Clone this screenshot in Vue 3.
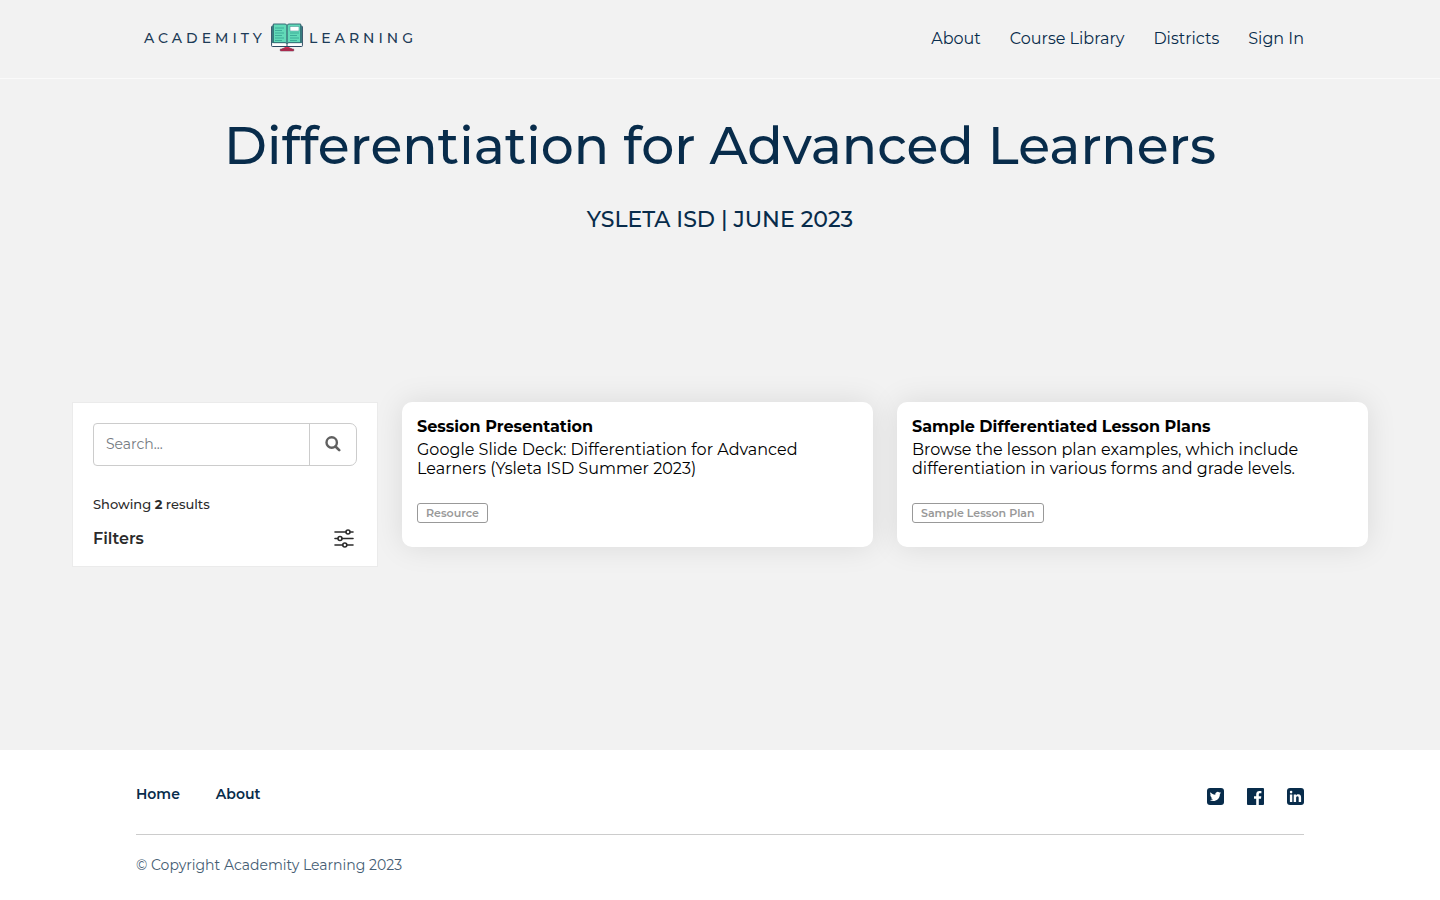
<script setup>
import { ref } from 'vue'

const query = ref('')
const navLinks = ['About', 'Course Library', 'Districts', 'Sign In']
const footerLinks = ['Home', 'About']
const cards = [
  {
    title: 'Session Presentation',
    text: 'Google Slide Deck: Differentiation for Advanced Learners (Ysleta ISD Summer 2023)',
    tag: 'Resource',
  },
  {
    title: 'Sample Differentiated Lesson Plans',
    text: 'Browse the lesson plan examples, which include differentiation in various forms and grade levels.',
    tag: 'Sample Lesson Plan',
  },
]
</script>

<template>
  <div class="page">
    <header class="header">
      <div class="container header-inner">
        <a class="logo" href="#" aria-label="Academity Learning">
          <span>ACADEMITY</span>
          <svg class="logo-book" viewBox="0 0 32 29" aria-hidden="true">
            <path d="M14 23h4v1.500l3 1.500H11l3-1.500z" fill="#e22b55" stroke="#a82c4c" stroke-width="0.500" />
            <rect x="9.300" y="26" width="13.400" height="2" rx="0.300" fill="#c92a50" stroke="#4d2c46" stroke-width="0.500" />
            <rect x="0.600" y="3" width="30.800" height="20.500" rx="0.800" fill="#fff" stroke="#2b4860" />
            <path d="M1 3h30v17H1z" fill="#3c8585" />
            <path d="M2.300 1h11.700q1.500 0 2 1.500q0.500-1.500 2-1.500h11.700v18.700H18q-1.500 0-2 1q-0.500-1-2-1H2.300z" fill="#62dab8" stroke="#2b5c6b" stroke-width="0.900" />
            <path d="M16 2.500V23.500" stroke="#2b4860" />
            <path d="M4 5h9M4 7.500h7M4 10h9M4 12.500h7M4 15h9M4 17.500h7M19 10h9M19 12.500h7M19 15h9M19 17.500h7" stroke="#3aa795" stroke-width="0.900" />
            <rect x="19" y="3.500" width="9" height="4.500" fill="#fff" stroke="#4d9b99" stroke-width="0.600" />
          </svg>
          <span>LEARNING</span>
        </a>
        <nav class="nav" aria-label="Main">
          <a v-for="link in navLinks" :key="link" href="#">{{ link }}</a>
        </nav>
      </div>
    </header>

    <main class="main">
      <section class="hero">
        <h1>Differentiation for Advanced Learners</h1>
        <p>YSLETA ISD | JUNE 2023</p>
      </section>

      <div class="content">
        <aside class="sidebar">
          <form class="search" role="search" @submit.prevent>
            <input v-model="query" type="text" placeholder="Search..." aria-label="Search" />
            <button type="submit" aria-label="Submit search">
              <svg viewBox="0 0 16 16" width="16" height="16" fill="none" stroke="#606060" aria-hidden="true">
                <circle cx="6.700" cy="6.500" r="5.200" stroke-width="2.400" />
                <path d="M10.500 10.500l3.700 3.700" stroke-width="2.600" stroke-linecap="round" />
              </svg>
            </button>
          </form>
          <p class="count">Showing <strong>2</strong> results</p>
          <button class="filters" type="button">
            <span>Filters</span>
            <svg viewBox="0 0 20 20" width="20" height="20" fill="none" stroke="#2b2b2b" stroke-width="1.600" stroke-linecap="round" aria-hidden="true">
              <path d="M1 4h10.500M16.500 4H19M1 10.500h2.500M8 10.500h11M1 17h7.500M13 17h6" />
              <circle cx="14" cy="4" r="2" />
              <circle cx="6" cy="10.500" r="2" />
              <circle cx="10.800" cy="17" r="2" />
            </svg>
          </button>
        </aside>

        <article v-for="card in cards" :key="card.title" class="card">
          <h2>{{ card.title }}</h2>
          <p>{{ card.text }}</p>
          <span class="tag">{{ card.tag }}</span>
        </article>
      </div>
    </main>

    <footer class="footer">
      <div class="container">
        <div class="footer-top">
          <nav class="footer-nav" aria-label="Footer">
            <a v-for="link in footerLinks" :key="link" href="#">{{ link }}</a>
          </nav>
          <div class="social">
            <a href="#" aria-label="Twitter">
              <svg viewBox="0.5 0.5 17 17" width="17" height="17" aria-hidden="true">
                <rect x="0.500" y="0.500" width="17" height="17" rx="3" fill="#082c4b" />
                <path d="M14.600 5.400c-.4.200-.9.300-1.300.400.500-.3.800-.7 1-1.300-.5.300-1 .5-1.500.6a2.350 2.350 0 0 0-4 2.100C6.900 7.100 5.200 6.200 4 4.800c-.6 1.100-.3 2.400.7 3.100-.4 0-.7-.1-1-.3 0 1.100.8 2.100 1.900 2.400-.4.100-.7.100-1.100 0 .3 1 1.200 1.600 2.200 1.600-1 .8-2.200 1.100-3.400 1 3.800 2.300 10.100.5 10.100-6.100.500-.3.900-.7 1.200-1.100z" fill="#fff" />
              </svg>
            </a>
            <a href="#" aria-label="Facebook">
              <svg viewBox="0.5 0.5 17 17" width="17" height="17" aria-hidden="true">
                <rect x="0.500" y="0.500" width="17" height="17" rx="1" fill="#082c4b" />
                <path d="M9.700 17.500v-6.300H7.500V8.700h2.200V6.800c0-2.200 1.300-3.400 3.300-3.400.9 0 1.500.1 1.900.1v2.200h-1.300c-1 0-1.300.5-1.300 1.300v1.700h2.500l-.3 2.500h-2.200v6.300z" fill="#fff" />
              </svg>
            </a>
            <a href="#" aria-label="LinkedIn">
              <svg viewBox="0.5 0.5 17 17" width="17" height="17" aria-hidden="true">
                <rect x="0.500" y="0.500" width="17" height="17" rx="3" fill="#082c4b" />
                <circle cx="4.600" cy="4.600" r="1.300" fill="#fff" />
                <path d="M3.400 7h2.400v7.500H3.400zM7.200 7h2.300v1c.4-.7 1.200-1.200 2.300-1.200 2.200 0 2.800 1.400 2.800 3.400v4.300h-2.400v-3.900c0-1-.2-1.800-1.200-1.800s-1.400.7-1.400 1.800v3.900H7.200z" fill="#fff" />
              </svg>
            </a>
          </div>
        </div>
        <p class="copyright">© Copyright Academity Learning 2023</p>
      </div>
    </footer>
  </div>
</template>

<style>
body {
  margin: 0;
  background: #f2f2f2;
}
</style>

<style scoped>
.page {
  min-height: 100vh;
  display: flex;
  flex-direction: column;
  font-family: Montserrat, Inter, "Open Sans", sans-serif;
  font-size: 16px;
  line-height: 19px;
  color: #000;
}

.page * {
  box-sizing: border-box;
}

h1,
h2,
p {
  margin: 0;
}

a {
  color: #082c4b;
  text-decoration: none;
}

.container {
  padding: 0 136px;
}

.header {
  border-bottom: 1px solid #fafafa;
}

.header-inner {
  display: flex;
  justify-content: space-between;
  align-items: center;
  height: 78px;
  padding-bottom: 2px;
}

.logo {
  display: flex;
  align-items: center;
  padding-left: 8px;
  font-size: 14px;
  letter-spacing: 4px;
  font-weight: 500;
  color: #1d3b57;
}

.logo-book {
  width: 32px;
  height: 29px;
  margin: 0 6px 2px 5px;
}

.nav {
  display: flex;
  gap: 29px;
}

.main {
  flex: 1;
}

.hero {
  padding-top: 35px;
  text-align: center;
  color: #082c4b;
}

.hero h1 {
  font-size: 52px;
  line-height: 64px;
  font-weight: 500;
}

.hero p {
  margin-top: 29px;
  font-size: 22px;
  line-height: 26px;
  font-weight: 500;
}

.content {
  display: grid;
  grid-template-columns: 306px 1fr 1fr;
  gap: 24px;
  align-items: start;
  padding: 169px 72px 72px;
}

.sidebar {
  padding: 20px 20px 18px;
  background: #fff;
  border: 1px solid #ebebeb;
  color: #2b2b2b;
}

.search {
  display: flex;
  height: 43px;
  border: 1px solid #ccc;
  border-radius: 4px 7px 7px 4px;
}

.search input {
  flex: 1;
  min-width: 0;
  padding: 0 12px;
  border: 0;
  background: none;
  font: inherit;
  font-size: 14px;
  color: #2b2b2b;
}

.search input::placeholder {
  color: #757b82;
  opacity: 1;
}

.search button {
  display: grid;
  place-items: center;
  width: 47px;
  padding: 0 0 2px;
  border: 0;
  border-left: 1px solid #ccc;
  background: none;
}

.count {
  margin-top: 29px;
  font-size: 13px;
  font-weight: 500;
}

.filters {
  display: flex;
  justify-content: space-between;
  align-items: center;
  width: 100%;
  margin-top: 14px;
  padding: 0 3px 0 0;
  border: 0;
  background: none;
  font: inherit;
  font-size: 16px;
  font-weight: 600;
  color: inherit;
}

.card {
  min-height: 145px;
  padding: 15px;
  background: #fff;
  border-radius: 10px;
  box-shadow: 0 0 30px rgba(0, 0, 0, 0.1);
}

.card h2 {
  font-size: 16px;
  line-height: 19px;
  font-weight: 700;
}

.card p {
  margin-top: 4px;
}

.tag {
  display: inline-block;
  margin-top: 25px;
  padding: 0 8px;
  border: 1px solid #999;
  border-radius: 3px;
  font-size: 11px;
  line-height: 18px;
  font-weight: 600;
  color: #999;
}

.footer {
  min-height: 150px;
  background: #fff;
}

.footer-top {
  display: flex;
  justify-content: space-between;
  align-items: flex-start;
  height: 85px;
  padding-top: 35px;
  border-bottom: 1px solid #ccc;
}

.footer-nav {
  display: flex;
  gap: 36px;
  font-size: 14px;
  font-weight: 600;
}

.social {
  display: flex;
  gap: 23px;
  padding-top: 3px;
}

.social a,
.social svg {
  display: block;
}

.copyright {
  padding: 21px 0 25px;
  font-size: 14px;
  color: #455d73;
}
</style>
